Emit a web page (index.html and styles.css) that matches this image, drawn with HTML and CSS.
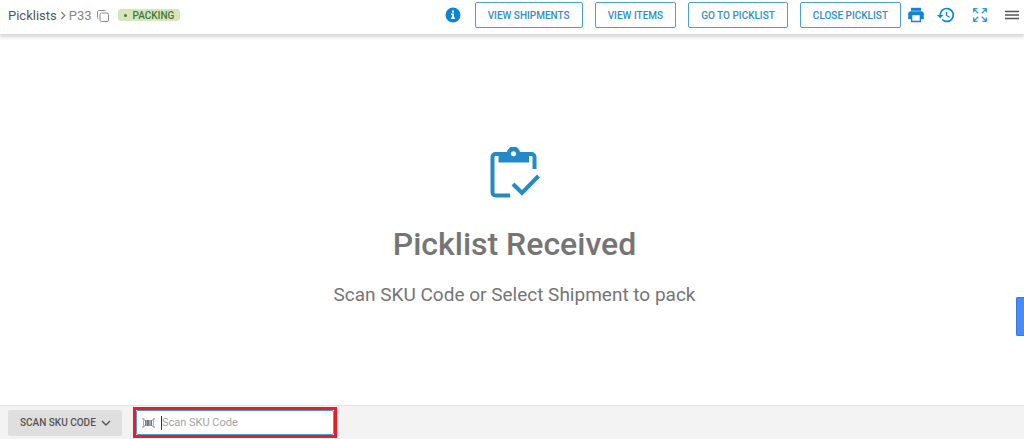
FILE: index.html
```html
<!DOCTYPE html>
<html lang="en">
<head>
<meta charset="utf-8">
<meta name="viewport" content="width=device-width, initial-scale=1">
<title>Picklist P33</title>
<link rel="stylesheet" href="styles.css">
</head>
<body>
<header class="topbar">
  <nav class="crumbs" aria-label="Breadcrumb">
    <a class="crumb-link" href="#">Picklists</a>
    <svg class="crumb-arrow" viewBox="0 0 6 10" aria-hidden="true"><path d="M1 1l4 4-4 4"/></svg>
    <span class="crumb-current">P33</span>
    <button class="icon-button copy" aria-label="Copy picklist number">
      <svg viewBox="0 0 12 12" width="12" height="12" fill="none" stroke="#8a8a8a"><rect x="3" y="3" width="8.5" height="8.5" rx="1.5"/><path d="M1.3 9C.8 8.600.5 8.200.5 7.500V2C.5 1.100 1.100.5 2 .5h5.500c.7 0 1.100.3 1.500.8"/></svg>
    </button>
    <span class="status"><span class="status-dot"></span>PACKING</span>
  </nav>
  <div class="actions">
    <button class="icon-button info" aria-label="Information">
      <svg viewBox="0 0 16 16" width="16" height="16"><circle cx="8" cy="8" r="7.500" fill="#0c86d1"/><path fill="#fff" d="M7 3.500h2v2H7zM6 6.500h3v4h1V12H6v-1.500h1V8H6z"/></svg>
    </button>
    <div class="action-list">
      <button class="action">VIEW SHIPMENTS</button>
      <button class="action">VIEW ITEMS</button>
      <button class="action">GO TO PICKLIST</button>
      <button class="action">CLOSE PICKLIST</button>
    </div>
    <button class="icon-button print" aria-label="Print">
      <svg viewBox="0 0 16 16" width="16" height="16" fill="#0c86d1"><path d="M3 .8h10v3H3z"/><path fill-rule="evenodd" d="M2.800 4.200h10.400A2.600 2.600 0 0 1 15.800 6.800v5.400H13v3H3v-3H.2V6.800a2.600 2.600 0 0 1 2.600-2.600zM4.300 8.300v5.500h7.400V8.300z"/></svg>
    </button>
    <button class="icon-button history" aria-label="History">
      <svg viewBox="0 0 21 18" width="17" height="16" fill="#0c86d1"><path d="M12 0a9 9 0 0 0-9 9H0l3.900 3.900.1.100L8 9H5a7 7 0 1 1 2.100 4.900l-1.400 1.400A9 9 0 1 0 12 0zm-1 5v5l4.300 2.500.7-1.200-3.500-2.100V5z"/></svg>
    </button>
    <button class="icon-button expand" aria-label="Full screen">
      <svg viewBox="0 0 14 14" width="14" height="14" fill="none" stroke="#2f9ddb" stroke-width="1.300"><path d="M.7 4.500V.7h3.800M.7.700l4.500 4.500M9.500.7h3.800v3.800M13.300.7L8.800 5.200M.7 9.500v3.800h3.800M.7 13.300l4.500-4.500M9.500 13.300h3.800V9.500M13.300 13.300L8.800 8.800"/></svg>
    </button>
    <button class="icon-button menu" aria-label="Menu">
      <svg viewBox="0 0 14 10" width="14" height="10" fill="#555"><path d="M0 .8h14v1.400H0zM0 4.300h14v1.400H0zM0 7.800h14v1.400H0z"/></svg>
    </button>
  </div>
</header>
<main class="content">
  <svg class="clipboard" viewBox="0 0 50 52" aria-hidden="true">
    <g fill="none" stroke="#2489c8" stroke-width="4"><path d="M20 48.500H5.500a3 3 0 0 1-3-3V10a3 3 0 0 1 3-3h36a3 3 0 0 1 3 3v12"/><path d="M23 37l9 9 16.500-17"/></g>
    <path fill="#2489c8" d="M8.500 6h8.500a6.500 6.500 0 0 1 13 0h9v9.500H8.500z"/>
    <circle cx="23.500" cy="6.800" r="2.500" fill="#fff"/>
  </svg>
  <h1 class="title">Picklist Received</h1>
  <p class="subtitle">Scan SKU Code or Select Shipment to pack</p>
</main>
<button class="side-tab" aria-label="Open side panel"></button>
<footer class="scanbar">
  <div class="mode">
    <select class="mode-select" aria-label="Scan mode"><option>SCAN SKU CODE</option></select>
    <svg class="mode-arrow" viewBox="0 0 10 6" aria-hidden="true"><path d="M1 1l4 4 4-4"/></svg>
  </div>
  <div class="highlight">
    <label class="scan-field">
      <svg class="barcode" viewBox="0 0 13 10" aria-hidden="true"><path fill="none" stroke="#858585" d="M0 1h2v2M0 9h2V7M13 1h-2v2M13 9h-2V7"/><path fill="#777" d="M3 2h1v6H3zM5 2h2v6H5zM9 2h1v6H9z"/><path fill="#9bacc8" d="M1 3h1v4H1zM4 2h1v6H4zM7 2h2v6H7zM11 3h1v4h-1z"/></svg>
      <span class="caret"></span>
      <input class="scan-input" type="text" placeholder="Scan SKU Code" aria-label="Scan SKU Code">
    </label>
  </div>
</footer>
</body>
</html>
```
FILE: styles.css
```css
* {
  box-sizing: border-box;
}

body {
  display: flex;
  flex-direction: column;
  min-height: 100vh;
  margin: 0;
  background: #fff;
  color: #757575;
  font-family: Roboto, "Liberation Sans", sans-serif;
}

button,
input,
select {
  margin: 0;
  font-family: inherit;
}

.topbar {
  display: flex;
  align-items: flex-start;
  justify-content: space-between;
  height: 34px;
  padding: 2px 5px 0 8px;
  box-shadow: 0 2px 4px 1px rgba(0, 0, 0, 0.16);
}

.crumbs,
.actions {
  display: flex;
  align-items: center;
  height: 26px;
}

.crumbs {
  font-size: 13px;
}

.crumb-link {
  color: #555;
  text-decoration: none;
}

.crumb-arrow {
  width: 6px;
  height: 9px;
  margin: 0 3px 0 3px;
  fill: none;
  stroke: #777;
  stroke-width: 1.3;
}

.crumb-current {
  color: #858585;
}

.icon-button {
  display: flex;
  padding: 0;
  border: 0;
  background: transparent;
}

.copy {
  margin: 2px 9px 0 5px;
}

.status {
  display: flex;
  align-items: center;
  gap: 6px;
  height: 12px;
  padding: 0 6px;
  border-radius: 3px;
  background: #d7e5bd;
  color: #43793b;
  font-size: 10px;
  font-weight: 500;
}

.status-dot {
  width: 3px;
  height: 3px;
  border-radius: 50%;
  background: #43793b;
}

.info {
  margin-right: 14px;
}

.action-list {
  display: flex;
  gap: 12px;
}

.action {
  height: 26px;
  padding: 0 12px;
  border: 1px solid #4a9fd0;
  border-radius: 2px;
  background: #fff;
  color: #2f8fca;
  font-size: 10px;
  font-weight: 500;
  white-space: nowrap;
}

.print {
  margin: 0 13px 0 7px;
}

.history {
  margin-right: 19px;
}

.expand {
  margin-right: 18px;
}

.content {
  display: flex;
  flex: 1;
  flex-direction: column;
  align-items: center;
  justify-content: center;
  padding: 14px 0 0 5px;
  text-align: center;
}

.clipboard {
  width: 50px;
  height: 52px;
}

.title {
  margin: 25px 0 0;
  font-size: 32px;
  font-weight: 500;
  line-height: 40px;
}

.subtitle {
  margin: 19px 0 0;
  font-size: 19px;
  line-height: 24px;
}

.side-tab {
  position: absolute;
  top: 297px;
  right: 0;
  width: 8px;
  height: 39px;
  padding: 0;
  border: 1px solid #2f7de9;
  border-right: 0;
  border-radius: 2px 0 0 2px;
  background: #4a8af4;
}

.scanbar {
  display: flex;
  align-items: center;
  gap: 11px;
  padding: 1px 8px;
  border-top: 1px solid #e2e2e2;
  background: #f3f3f3;
}

.mode {
  display: grid;
  align-items: center;
}

.mode-select {
  grid-area: 1 / 1;
  height: 26px;
  padding: 0 26px 0 12px;
  border: 0;
  border-radius: 2px;
  appearance: none;
  background: #dfdfdf;
  color: #555;
  font-size: 10px;
  font-weight: 500;
}

.mode-arrow {
  grid-area: 1 / 1;
  justify-self: end;
  width: 10px;
  height: 6px;
  margin-right: 11px;
  fill: none;
  stroke: #555;
  stroke-width: 1.4;
  pointer-events: none;
}

.highlight {
  width: 204px;
  border: 3px solid #ec1c24;
}

.scan-field {
  display: flex;
  align-items: center;
  height: 25px;
  padding-left: 5px;
  border: 1px solid #4a9fd0;
  border-radius: 2px;
  background: #fff;
}

.barcode {
  flex: none;
  width: 13px;
  height: 10px;
  margin-right: 6px;
}

.caret {
  flex: none;
  width: 1px;
  height: 14px;
  background: #333;
}

.scan-input {
  flex: 1;
  min-width: 0;
  padding: 0;
  border: 0;
  outline: 0;
  background: transparent;
  color: #555;
  font-size: 11px;
}

.scan-input::placeholder {
  color: #a3a3a3;
}
```
